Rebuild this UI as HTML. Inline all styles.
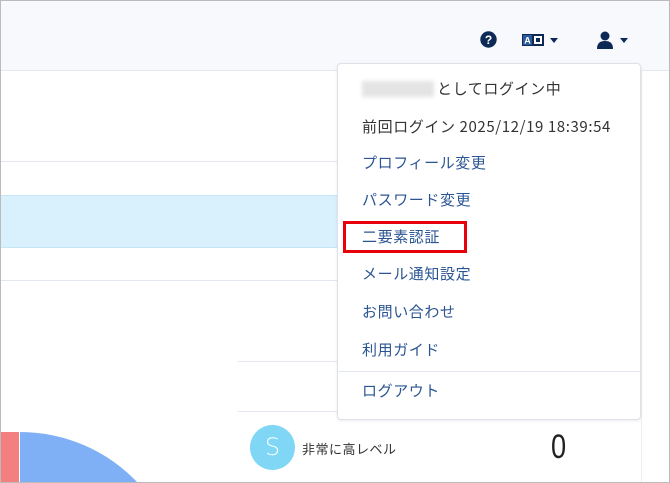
<!DOCTYPE html><html><head><meta charset="utf-8"><style>
html,body{margin:0;width:670px;height:483px;overflow:hidden}
body{position:relative;background:#fff;font-family:"Noto Sans CJK JP","Liberation Sans",sans-serif;}
.a{position:absolute}
.it{position:absolute;left:362px;font-size:15px;line-height:20px;color:#2b5592;white-space:nowrap;letter-spacing:.6px}
.dk{color:#333}
</style></head><body>
<div class="a" style="left:0;top:0;width:670px;height:70px;background:#f7f9fc;border-bottom:1px solid #e3e7ee"></div>
<div class="a" style="left:0;top:161px;width:337px;height:1px;background:#e3e7ee"></div>
<div class="a" style="left:0;top:195px;width:337px;height:51px;background:#d9f1fd;border-top:1px solid #c6e5f5;border-bottom:1px solid #c6e5f5"></div>
<div class="a" style="left:0;top:280px;width:337px;height:1px;background:#e3e7ee"></div>
<div class="a" style="left:238px;top:361px;width:100px;height:1px;background:#e3e7ee"></div>
<div class="a" style="left:238px;top:411px;width:100px;height:1px;background:#e3e7ee"></div>
<div class="a" style="left:641px;top:70px;width:1px;height:413px;background:#eee"></div>
<svg class="a" style="left:480px;top:31px" width="17" height="17" viewBox="0 0 17 17"><circle cx="8.5" cy="8.5" r="8.2" fill="#0d2a57"/><text x="8.5" y="13" font-size="12" font-weight="bold" text-anchor="middle" fill="#fff" font-family="Liberation Sans">?</text></svg>
<svg class="a" style="left:522px;top:34px" width="22" height="12"><rect width="22" height="12" fill="#0d2a57"/><rect x="1" y="1" width="9" height="10" fill="#2d5a9a"/><text x="5.5" y="9.5" font-size="9" font-weight="bold" text-anchor="middle" fill="#fff" font-family="Liberation Sans">A</text><rect x="12" y="2" width="8" height="8" fill="#fff"/><rect x="14" y="4" width="4" height="4" fill="#0d2a57"/></svg>
<svg class="a" style="left:550px;top:38px" width="8" height="5"><path d="M0 0L8 0L4 5Z" fill="#0d2a57"/></svg>
<svg class="a" style="left:596px;top:31px" width="18" height="18"><circle cx="9" cy="5" r="4.5" fill="#0d2a57"/><path d="M1 18C1 12 4 10 9 10S17 12 17 18Z" fill="#0d2a57"/></svg>
<svg class="a" style="left:620px;top:38px" width="8" height="5"><path d="M0 0L8 0L4 5Z" fill="#0d2a57"/></svg>
<div class="a" style="left:337px;top:63px;width:302px;height:355px;background:#fff;border:1px solid #dde2e8;border-radius:4px;box-shadow:0 1px 3px rgba(0,0,0,.08)"></div>
<div class="a" style="left:362px;top:81px;width:72px;height:16px;background:#e4e4e4;filter:blur(2px)"></div>
<div class="it dk" style="left:437px;top:79px">としてログイン中</div>
<div class="it dk" style="top:117px">前回ログイン 2025/12/19 18:39:54</div>
<div class="it" style="top:153px">プロフィール変更</div>
<div class="it" style="top:190px">パスワード変更</div>
<div class="it" style="top:227px">二要素認証</div>
<div class="a" style="left:343px;top:221px;width:118px;height:26px;border:3px solid #e8000b"></div>
<div class="it" style="top:264px">メール通知設定</div>
<div class="it" style="top:302px">お問い合わせ</div>
<div class="it" style="top:340px">利用ガイド</div>
<div class="a" style="left:338px;top:371px;width:302px;height:1px;background:#e3e7ee"></div>
<div class="it" style="top:381px">ログアウト</div>
<div class="a" style="left:250px;top:425px;width:45px;height:45px;border-radius:50%;background:#7fd6f5;color:#fff;font-size:24px;font-weight:300;text-align:center;line-height:45px;font-family:'DejaVu Sans',sans-serif">S</div>
<div class="a" style="left:302px;top:440px;font-size:13px;line-height:18px;color:#333;letter-spacing:.5px">非常に高レベル</div>
<div class="a" style="left:551px;top:427px;font-size:34px;line-height:40px;color:#222;font-family:'Liberation Sans',sans-serif;transform:scaleX(.8);transform-origin:left">0</div>
<svg class="a" style="left:0;top:0" width="670" height="483"><rect x="0" y="432" width="19" height="51" fill="#f47f7f"/><path d="M20 483L20 432A162 162 0 0 1 138 483Z" fill="#7fb0f5"/></svg>
<div class="a" style="left:0;top:0;width:668px;height:481px;border:1px solid #bbb"></div>
</body></html>
